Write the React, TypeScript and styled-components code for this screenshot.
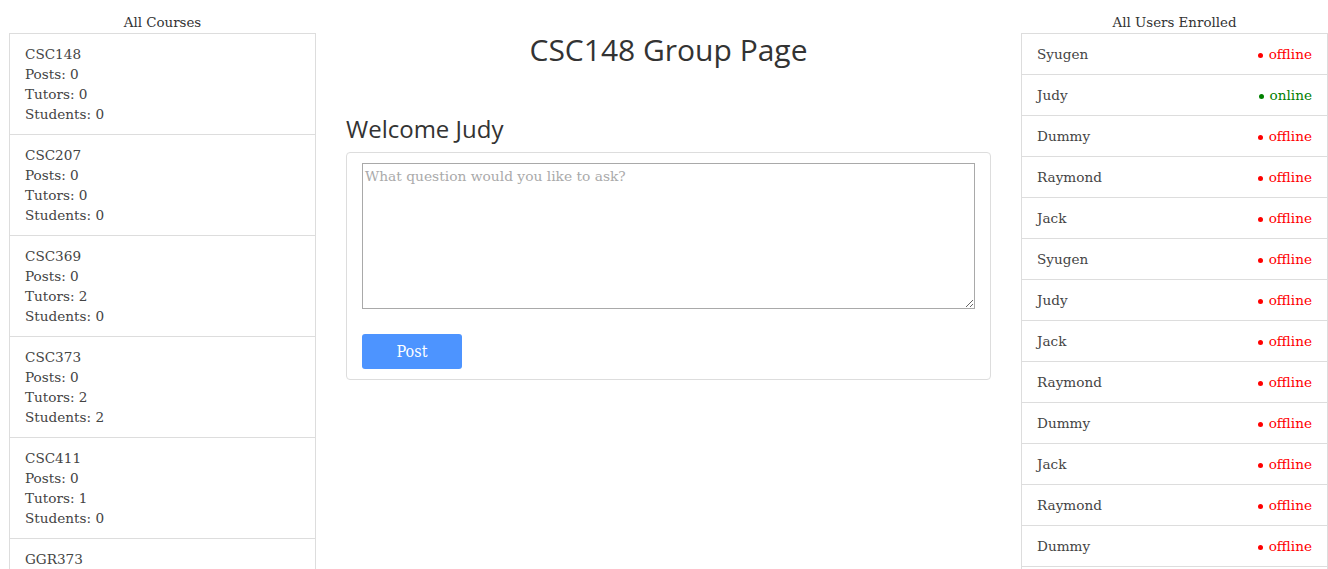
import React from "react";
import styled, { createGlobalStyle } from "styled-components";

const Global = createGlobalStyle`
  html, body { margin: 0; padding: 0; background: #fff; }
  body { font-family: "DejaVu Serif", serif; color: #444; }
  * { box-sizing: border-box; }
`;

const Page = styled.div`
  display: flex;
  align-items: flex-start;
  gap: 30px;
  padding-left: 9px;
  width: 1328px;
  height: 569px;
  overflow: hidden;
`;

const SideColumn = styled.div`
  width: 307px;
  flex: none;
  display: flex;
  flex-direction: column;
`;

const SideTitle = styled.div`
  font-family: "DejaVu Serif", serif;
  font-size: 13.4px;
  color: #333;
  text-align: center;
  height: 33px;
  line-height: 14px;
  padding-top: 16px;
`;

const List = styled.div`
  border: 1px solid #ddd;
  border-bottom: none;
  display: flex;
  flex-direction: column;
`;

const CourseItem = styled.div`
  padding: 10px 15px 0;
  height: 101px;
  border-bottom: 1px solid #ddd;
  font-size: 13.6px;
  line-height: 20px;
  color: #444;
`;

const UserRow = styled.div`
  display: flex;
  justify-content: space-between;
  align-items: center;
  height: 41px;
  padding: 0 15px;
  border-bottom: 1px solid #ddd;
  font-size: 13.6px;
  color: #444;
`;

const Status = styled.span<{ $online: boolean }>`
  color: ${(p) => (p.$online ? "#008000" : "#ff0000")};
  display: flex;
  align-items: center;
  gap: 6px;
`;

const Dot = styled.span<{ $online: boolean }>`
  width: 5px;
  height: 5px;
  border-radius: 50%;
  background: ${(p) => (p.$online ? "#008000" : "#ff0000")};
  display: inline-block;
  margin-top: 2px;
`;

const Center = styled.div`
  width: 645px;
  flex: none;
  display: flex;
  flex-direction: column;
`;

const PageTitle = styled.h1`
  margin: 0;
  font-family: "Open Sans", sans-serif;
  font-weight: 400;
  font-size: 30px;
  line-height: 40px;
  color: #333;
  text-align: center;
  padding-top: 30px;
`;

const Welcome = styled.h2`
  margin: 0;
  font-family: "Open Sans", sans-serif;
  font-weight: 400;
  font-size: 24px;
  line-height: 32px;
  color: #333;
  margin-top: 43px;
  height: 39px;
`;

const Card = styled.div`
  border: 1px solid #ddd;
  border-radius: 4px;
  padding: 10px 15px 10px;
  display: flex;
  flex-direction: column;
  align-items: flex-start;
  gap: 25px;
`;

const Question = styled.textarea`
  width: 613px;
  height: 146px;
  border: 1px solid #a9a9a9;
  padding: 4px 2px;
  font-family: "DejaVu Serif", serif;
  font-size: 13.8px;
  color: #333;
  &::placeholder { color: #aaa; }
`;

const PostButton = styled.button`
  width: 100px;
  height: 35px;
  border: none;
  border-radius: 3px;
  background: #4d94ff;
  color: #fff;
  font-family: "DejaVu Serif Condensed", "DejaVu Serif", serif;
  font-size: 16px;
`;

const courses = [
  ["CSC148", 0, 0, 0],
  ["CSC207", 0, 0, 0],
  ["CSC369", 0, 2, 0],
  ["CSC373", 0, 2, 2],
  ["CSC411", 0, 1, 0],
  ["GGR373", 0, 0, 0],
] as const;

const users: [string, boolean][] = [
  ["Syugen", false],
  ["Judy", true],
  ["Dummy", false],
  ["Raymond", false],
  ["Jack", false],
  ["Syugen", false],
  ["Judy", false],
  ["Jack", false],
  ["Raymond", false],
  ["Dummy", false],
  ["Jack", false],
  ["Raymond", false],
  ["Dummy", false],
  ["Jack", false],
];

export default function App() {
  return (
    <>
      <Global />
      <Page>
        <SideColumn>
          <SideTitle>All Courses</SideTitle>
          <List>
            {courses.map(([name, posts, tutors, students], i) => (
              <CourseItem key={i}>
                <div>{name}</div>
                <div>Posts: {posts}</div>
                <div>Tutors: {tutors}</div>
                <div>Students: {students}</div>
              </CourseItem>
            ))}
          </List>
        </SideColumn>
        <Center>
          <PageTitle>CSC148 Group Page</PageTitle>
          <Welcome>Welcome Judy</Welcome>
          <Card>
            <Question placeholder="What question would you like to ask?" />
            <PostButton>Post</PostButton>
          </Card>
        </Center>
        <SideColumn>
          <SideTitle>All Users Enrolled</SideTitle>
          <List>
            {users.map(([name, online], i) => (
              <UserRow key={i}>
                <span>{name}</span>
                <Status $online={online}>
                  <Dot $online={online} />
                  {online ? "online" : "offline"}
                </Status>
              </UserRow>
            ))}
          </List>
        </SideColumn>
      </Page>
    </>
  );
}
